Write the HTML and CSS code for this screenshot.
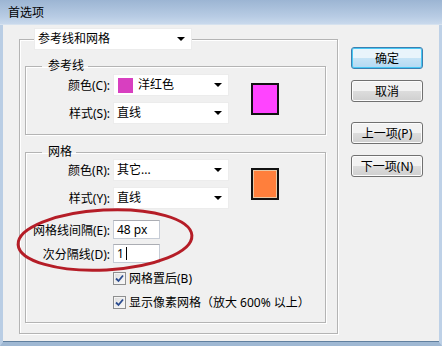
FILE: index.html
```html
<!DOCTYPE html>
<html lang="zh-CN">
<head>
    <meta charset="UTF-8">
    <title>首选项</title>
    <link rel="stylesheet" href="styles.css">
</head>
<body>

<div class="window">
    <div class="titlebar">首选项</div>

    <div class="content">
        <fieldset class="outer">
            <legend class="select legend-select">
                <span class="select-text">参考线和网格</span>
                <span class="arrow"></span>
            </legend>

            <fieldset class="group guides">
                <legend>参考线</legend>
                <div class="pair">
                    <div class="rows">
                        <div class="row">
                            <span class="label">颜色(C):</span>
                            <div class="select">
                                <span class="chip chip-magenta"></span>
                                <span class="select-text">洋红色</span>
                                <span class="arrow"></span>
                            </div>
                        </div>
                        <div class="row">
                            <span class="label">样式(S):</span>
                            <div class="select">
                                <span class="select-text">直线</span>
                                <span class="arrow"></span>
                            </div>
                        </div>
                    </div>
                    <div class="swatch swatch-magenta"></div>
                </div>
            </fieldset>

            <fieldset class="group grid">
                <legend>网格</legend>
                <div class="pair">
                    <div class="rows">
                        <div class="row">
                            <span class="label">颜色(R):</span>
                            <div class="select">
                                <span class="select-text">其它...</span>
                                <span class="arrow"></span>
                            </div>
                        </div>
                        <div class="row">
                            <span class="label">样式(Y):</span>
                            <div class="select">
                                <span class="select-text">直线</span>
                                <span class="arrow"></span>
                            </div>
                        </div>
                    </div>
                    <div class="swatch swatch-orange"></div>
                </div>

                <div class="row short first-input">
                    <span class="label">网格线间隔(E):</span>
                    <div class="input">48 px</div>
                </div>
                <div class="row short second-input">
                    <span class="label">次分隔线(D):</span>
                    <div class="input">1<span class="caret"></span></div>
                </div>

                <div class="check-row first-check">
                    <span class="checkbox">
                        <svg width="9" height="9" viewBox="0 0 9 9"><path d="M1 4.5 L3.5 7 L8 1.5" fill="none" stroke="#2b4c8f" stroke-width="1.8"/></svg>
                    </span>
                    网格置后(B)
                </div>
                <div class="check-row">
                    <span class="checkbox">
                        <svg width="9" height="9" viewBox="0 0 9 9"><path d="M1 4.5 L3.5 7 L8 1.5" fill="none" stroke="#2b4c8f" stroke-width="1.8"/></svg>
                    </span>
                    显示像素网格（放大 600% 以上）
                </div>
            </fieldset>
        </fieldset>

        <div class="buttons">
            <button class="btn btn-default">确定</button>
            <button class="btn">取消</button>
            <button class="btn btn-gap">上一项(P)</button>
            <button class="btn">下一项(N)</button>
        </div>
    </div>

    <!-- красная обводка поверх полей -->
    <svg class="mark" width="442" height="346" viewBox="0 0 442 346">
        <ellipse cx="105" cy="240" rx="87" ry="30" transform="rotate(-3 105 240)"
                 fill="none" stroke="#b51d27" stroke-width="3"/>
    </svg>
</div>

</body>
</html>
```

FILE: styles.css
```css
html, body {
    margin: 0;
    padding: 0;
}

body {
    font-family: "Noto Sans", "Noto Sans CJK SC", sans-serif;
    font-size: 12px;
    color: #000;
}

.window {
    position: relative;
    width: 442px;
    height: 346px;
    box-sizing: border-box;
    background: #f0f0f0;
    border-left: 3px solid #b9cde4;
    border-right: 3px solid #bed1e7;
    border-bottom: 4px solid #9fb8d3;
    box-shadow: inset 0 -1px 0 #61809f;
}

.titlebar {
    height: 25px;
    line-height: 25px;
    margin: 0 -3px 0 -3px;
    padding-left: 8px;
    background: linear-gradient(#9cb5d3, #b8cce4 70%, #c9d9ec);
    border-bottom: 1px solid #d6e2ef;
    box-sizing: border-box;
}

.content {
    display: flex;
    padding: 3px 0 0 16px;
}

fieldset {
    margin: 0;
    padding: 0;
    border: 1px solid #b4b4b4;
    box-shadow: 1px 1px 0 #fff, inset 1px 1px 0 #fff;
}

.outer {
    width: 319px;
    height: 306px;
    box-sizing: border-box;
    padding: 0 11px 0 5px;
}

.legend-select {
    margin-left: 9px;
    padding: 0;
}

.group {
    margin-top: 9px;
}

.group legend {
    margin-left: 16px;
    padding: 0 4px 0 6px;
    line-height: 14px;
}

.guides {
    padding: 1px 0 10px 0;
}

.grid {
    margin-top: 10px;
    padding: 0 0 11px 0;
}

.pair {
    display: flex;
    align-items: center;
}

.rows {
    display: flex;
    flex-direction: column;
    gap: 6px;
}

.row {
    display: flex;
    align-items: center;
    height: 22px;
}

.row.short {
    height: 19px;
}

.first-input {
    margin-top: 11px;
}

.second-input {
    margin-top: 5px;
}

.label {
    width: 84px;
    margin-right: 3px;
    text-align: right;
    white-space: nowrap;
}

.select {
    position: relative;
    display: flex;
    align-items: center;
    width: 116px;
    height: 22px;
    box-sizing: border-box;
    background: #fff;
    border: 1px solid #ececec;
}

.legend-select {
    width: 158px;
}

.select-text {
    padding-left: 3px;
    line-height: 16px;
}

.chip {
    width: 15px;
    height: 15px;
    margin-left: 4px;
    margin-right: 2px;
}

.chip-magenta {
    background: #d83fc0;
}

.arrow {
    position: absolute;
    right: 6px;
    top: 8px;
    width: 0;
    height: 0;
    border-left: 4px solid transparent;
    border-right: 4px solid transparent;
    border-top: 4px solid #000;
}

.swatch {
    width: 28px;
    height: 32px;
    box-sizing: border-box;
    margin-left: 22px;
    border: 2px solid #111;
}

.swatch-magenta {
    background: #ff44ff;
}

.swatch-orange {
    background: #ff7f3c;
    box-shadow: inset 0 0 0 1px #e9c8a4;
}

.input {
    display: flex;
    align-items: center;
    width: 47px;
    height: 19px;
    box-sizing: border-box;
    padding-left: 3px;
    background: #fff;
    border: 1px solid #c6ccd6;
    border-top-color: #abadb3;
    line-height: 15px;
}

.caret {
    display: inline-block;
    width: 1px;
    height: 13px;
    margin-left: 2px;
    background: #000;
}

.check-row {
    display: flex;
    align-items: center;
    height: 18px;
    margin-top: 6px;
    padding-left: 87px;
    white-space: nowrap;
}

.first-check {
    margin-top: 6px;
}

.checkbox {
    display: flex;
    align-items: center;
    justify-content: center;
    width: 13px;
    height: 13px;
    box-sizing: border-box;
    margin-right: 3px;
    border: 1px solid #8e8f8f;
    background: linear-gradient(135deg, #dcdcdc, #fbfbfb);
    box-shadow: inset 0 0 0 1px #f4f4f4;
}

.buttons {
    display: flex;
    flex-direction: column;
    margin-left: 13px;
    padding-top: 19px;
}

.btn {
    width: 72px;
    height: 22px;
    margin-bottom: 11px;
    padding: 0;
    font-family: inherit;
    font-size: 12px;
    color: #000;
    border: 1px solid #707070;
    border-radius: 3px;
    background: linear-gradient(#f2f2f2 50%, #dddddd 50%, #cfcfcf);
    box-shadow: inset 0 0 0 1px #fcfcfc;
}

.btn-default {
    border-color: #3c7fb1;
    background: linear-gradient(#e9f4fb 50%, #c7e4f6 50%, #b3d9f3);
    box-shadow: inset 0 0 0 1px #48c8f4;
}

.btn-gap {
    margin-top: 9px;
}

.mark {
    position: absolute;
    left: -3px;
    top: 0;
    pointer-events: none;
}
```
